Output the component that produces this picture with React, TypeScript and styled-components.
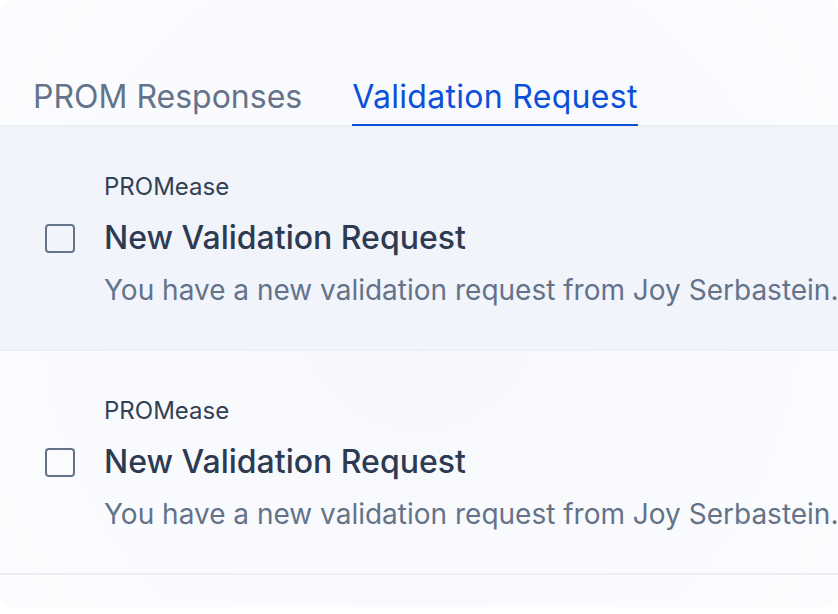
import React, { FC } from 'react';
import styled, { createGlobalStyle } from 'styled-components';

const GlobalStyle = createGlobalStyle`
  html, body {
    margin: 0;
    padding: 0;
    background: #ffffff;
  }
  body {
    font-family: Inter, 'Noto Sans', sans-serif;
  }
`;

const Card = styled.div`
  width: 838px;
  height: 607px;
  border-radius: 14px;
  overflow: hidden;
  background: radial-gradient(circle at 50% 52%, #f7f8fc 0%, #f9fafd 45%, #fbfcfe 100%);
  display: flex;
  flex-direction: column;
`;

const TabBar = styled.div`
  display: flex;
  gap: 50px;
  padding: 81px 0 0 33px;
  border-bottom: 2px solid #eceef3;
`;

const Tab = styled.div<{ active?: boolean }>`
  font-size: 32px;
  line-height: 32px;
  padding-bottom: 11px;
  letter-spacing: ${({ active }) => (active ? '0.3px' : '0')};
  color: ${({ active }) => (active ? '#0b50da' : '#64738a')};
  border-bottom: 2px solid ${({ active }) => (active ? '#0b50da' : 'transparent')};
  margin-bottom: -1px;
`;

const Row = styled.div<{ unread?: boolean }>`
  display: grid;
  grid-template-columns: 30px 1fr;
  align-content: start;
  align-items: center;
  column-gap: 29px;
  padding: 48px 0 0 45px;
  height: 224px;
  box-sizing: border-box;
  background: ${({ unread }) => (unread ? '#f1f4fa' : 'transparent')};
  border-bottom: 2px solid #eceef3;
  white-space: nowrap;
`;

const Source = styled.div`
  grid-column: 2;
  font-size: 24px;
  line-height: 24px;
  color: #334155;
`;

const Check = styled.div`
  width: 30px;
  height: 29px;
  margin-top: 23px;
  box-sizing: border-box;
  border: 2px solid #64738a;
  border-radius: 4px;
`;

const Title = styled.div`
  font-size: 32px;
  line-height: 32px;
  margin-top: 23px;
  color: #2d3b52;
  font-weight: 500;
`;

const Message = styled.div`
  grid-column: 2;
  font-size: 28px;
  line-height: 28px;
  margin-top: 22px;
  color: #64738a;
`;

type Notice = { source: string; title: string; message: string; unread: boolean };

const notices: Notice[] = [
  {
    source: 'PROMease',
    title: 'New Validation Request',
    message: 'You have a new validation request from Joy Serbastein.',
    unread: true,
  },
  {
    source: 'PROMease',
    title: 'New Validation Request',
    message: 'You have a new validation request from Joy Serbastein.',
    unread: false,
  },
];

const NoticeRow: FC<Notice> = ({ source, title, message, unread }) => (
  <Row unread={unread}>
    <Source>{source}</Source>
    <Check />
    <Title>{title}</Title>
    <Message>{message}</Message>
  </Row>
);

export default function App() {
  return (
    <>
      <GlobalStyle />
      <Card>
        <TabBar>
          <Tab>PROM Responses</Tab>
          <Tab active>Validation Request</Tab>
        </TabBar>
        {notices.map((n, i) => (
          <NoticeRow key={i} {...n} />
        ))}
      </Card>
    </>
  );
}
